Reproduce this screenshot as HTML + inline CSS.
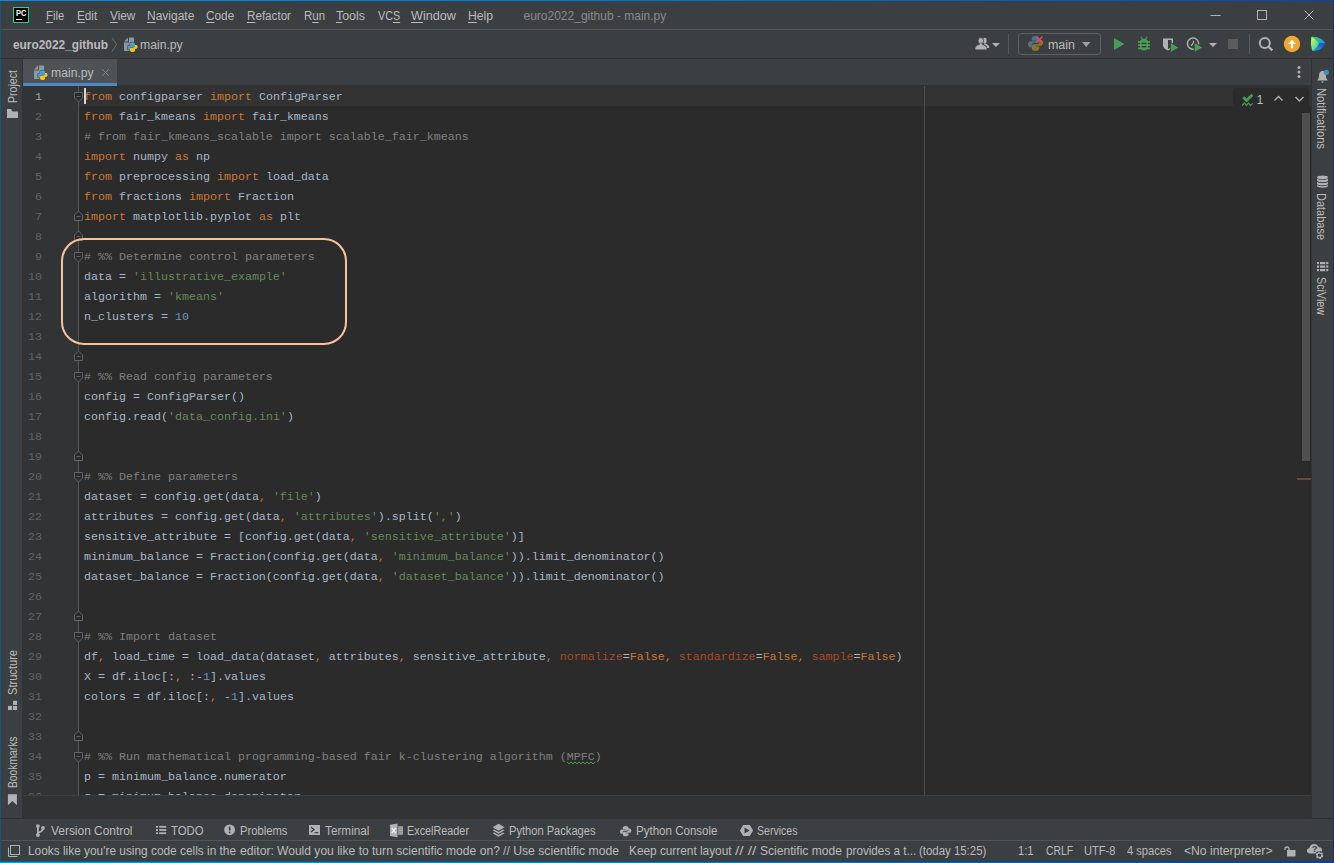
<!DOCTYPE html>
<html><head><meta charset="utf-8"><title>euro2022_github - main.py</title>
<style>
*{box-sizing:border-box;margin:0;padding:0}
html,body{width:1334px;height:863px;overflow:hidden;background:#3c3f41}
body{font-family:"Liberation Sans",sans-serif;color:#bbbbbb;font-size:12px;position:relative}
.abs{position:absolute}
svg{display:block;overflow:visible}
#win{position:absolute;left:0;top:0;width:1334px;height:863px;background:#3c3f41;overflow:hidden}
/* window frame */
#ftop{left:0;top:0;width:1334px;height:1px;background:linear-gradient(90deg,#0090e0,#0075d2 50%,#0446b0)}
#fleft{left:0;top:1px;width:1px;height:862px;background:#16567a}
#fright{left:1333px;top:1px;width:1px;height:862px;background:#183162}
#fbot{left:0;top:861px;width:1334px;height:2px;background:linear-gradient(90deg,#00a0e6,#007ec2 50%,#0a3fa0)}
#fbot2{left:0;top:861px;width:1334px;height:1px;background:linear-gradient(90deg,#15607f,#284b60 50%,#173c80)}
.lb{position:absolute;white-space:pre;line-height:14px;color:#bbbbbb}
.lb u{text-decoration:underline;text-underline-offset:1.5px;text-decoration-thickness:1px}
.hline{position:absolute;left:1px;width:1332px;height:1px}
.vt{position:absolute;white-space:pre;line-height:14px;font-size:12px;color:#bbbbbb;transform-origin:0 0}
/* editor */
#editor{left:23px;top:86px;width:1288px;height:709px;background:#2b2b2b;overflow:hidden}
#gutter{left:0;top:0;width:56px;height:710px;background:#313335}
#curline{left:56px;top:0;width:1232px;height:20px;background:#323232}
#foldline{left:55px;top:0;width:1px;height:710px;background:#555555}
#margin{left:901px;top:0;width:1px;height:710px;background:#4b4b4b}
#code{left:61px;top:1px;width:1200px;height:710px}
.ln{position:absolute;left:0;height:20px;line-height:20px;white-space:pre;font-family:"Liberation Mono",monospace;font-size:11.665px;color:#a9b7c6}
.k{color:#cc7832}.c{color:#808080}.s{color:#6a8759}.n{color:#6897bb}.p{color:#aa4926}
.w{color:#808080}
.no{position:absolute;left:0;width:19px;text-align:right;height:20px;line-height:20px;font-family:"Liberation Mono",monospace;font-size:11.665px;color:#606366}
.no.cur{color:#a4a3a3}
</style></head><body>
<div id="win">
<!-- menu bar -->
<div class="abs" style="left:13px;top:7px;width:16px;height:16px;background:#000;border:1px solid #21d789"></div>
<div class="abs" style="left:15.600px;top:8.600px;font-size:8.800px;font-weight:bold;color:#fff;line-height:9px;transform:scaleX(0.86);transform-origin:0 0">PC</div>
<div class="abs" style="left:16px;top:19px;width:6px;height:1px;background:#fff"></div>
<!-- window controls -->
<svg class="abs" style="left:1200px;top:1px" width="133" height="28" viewBox="0 0 133 28">
 <path d="M10.5,14.5 H20.5" stroke="#b4b4b4" stroke-width="1" fill="none"/>
 <rect x="57.5" y="9.5" width="9" height="9" stroke="#b4b4b4" stroke-width="1" fill="none"/>
 <path d="M104.5,9.5 L113.5,18.5 M113.5,9.5 L104.5,18.5" stroke="#b4b4b4" stroke-width="1" fill="none"/>
</svg>
<div class="hline" style="top:29px;background:#515355"></div>
<!-- nav bar -->
<svg class="abs" style="left:111px;top:37px" width="7" height="15" viewBox="0 0 7 15"><path d="M1,0.5 L5.5,7.5 L1,14.5" stroke="#6b6e70" stroke-width="1" fill="none"/></svg>
<svg class="abs pyfile" style="left:123px;top:36px;color:#3c3f41" width="16" height="17" viewBox="0 0 16 17"><use href="#pyfile"/></svg>
<div class="hline" style="top:58px;background:#323232"></div>
<!-- toolbar -->
<svg class="abs" style="left:960px;top:30px" width="374" height="28" viewBox="0 0 374 28">
 <!-- users -->
 <g fill="#afb1b3">
  <ellipse cx="24.800" cy="10.600" rx="1.900" ry="2.900"/>
  <path d="M24,13.300 C27.500,14 29.300,15.300 29.300,18 H27 C27,16 26,15 24,14.500 Z"/>
  <ellipse cx="20.800" cy="10.900" rx="2.700" ry="3.400" stroke="#3c3f41" stroke-width="0.800"/>
  <path d="M15,19.800 C15,16.200 17,15.300 19.500,14.600 V13 H22.100 V14.600 C24.600,15.300 27,16.200 27,19.800 Z" stroke="#3c3f41" stroke-width="0.500"/>
  <path d="M31.900,12.900 H40 L35.950,17 Z"/>
 </g>
 <rect x="48" y="4" width="1" height="20" fill="#555759"/>
 <!-- run config -->
 <rect x="58.5" y="3.5" width="82" height="21" rx="3" ry="3" fill="none" stroke="#5e6162"/>
 <g transform="translate(68,6) scale(1.5)">
  <path d="M5,0 C3,0 2.5,1 2.5,2 V3 H5 V3.5 H1.5 C0.5,3.5 0,4.5 0,5.5 C0,6.5 0.5,7.5 1.5,7.5 H2.5 V6 C2.5,5 3.3,4.5 4,4.5 H6 C6.8,4.5 7.5,4 7.5,3 V2 C7.5,1 7,0 5,0 Z" fill="#4a7591"/>
  <path d="M5,10 C7,10 7.5,9 7.5,8 V7 H5 V6.5 H8.5 C9.5,6.5 10,5.5 10,4.5 C10,3.5 9.5,2.5 8.500,2.5 H7.5 V4 C7.5,5 6.7,5.5 6,5.5 H4 C3.2,5.500 2.5,6 2.5,7 V8 C2.5,9 3,10 5,10 Z" fill="#8b742c"/>
 </g>
 <path d="M76.500,6.500 L82.500,12.500 M82.500,6.500 L76.500,12.500" stroke="#e0485a" stroke-width="1.600"/>
 <path d="M122,12 H130.500 L126.250,17 Z" fill="#9c9ea0"/>
 <!-- run -->
 <path d="M154,8 L164.500,14 L154,20 Z" fill="#499c54"/>
 <!-- debug -->
 <g fill="#499c54">
  <path d="M180,12 C180,9.500 182,9 184,9 C186,9 188,9.500 188,12 V16.500 C188,19 186.500,20.500 184,20.500 C181.500,20.500 180,19 180,16.500 Z"/>
  <path d="M180.300,7 L181.300,6.300 L183,8.800 H185 L186.700,6.300 L187.700,7 L185.800,9.800 H182.200 Z"/>
  <rect x="178" y="11" width="12" height="1.800"/><rect x="178" y="14.200" width="12" height="1.800"/><rect x="178" y="17.400" width="12" height="1.800"/>
 </g>
 <rect x="181.500" y="12.800" width="5" height="1.400" fill="#3c3f41"/><rect x="181.500" y="16" width="5" height="1.400" fill="#3c3f41"/>
 <!-- coverage -->
 <path d="M203,8.500 H213 V15 C213,18 210.500,19.500 208,20.500 C205.500,19.500 203,18 203,15 Z" fill="#afb1b3"/>
 <path d="M208,10 H211.500 V15 C211.500,17 210,18 208,19 Z" fill="#3c3f41"/>
 <path d="M210.300,12.300 L219,17.500 L210.300,22.700 Z" fill="#499c54" stroke="#3c3f41" stroke-width="1"/>
 <!-- profile -->
 <circle cx="233" cy="13.600" r="5.600" fill="none" stroke="#afb1b3" stroke-width="1.400"/>
 <path d="M233.500,10.800 V12.500 L231.200,15.800" stroke="#afb1b3" stroke-width="1.300" fill="none"/>
 <path d="M234.200,12.300 L243,17.500 L234.200,22.700 Z" fill="#499c54" stroke="#3c3f41" stroke-width="1"/>
 <path d="M249,13 H257 L253,17 Z" fill="#afb1b3"/>
 <!-- stop -->
 <rect x="268" y="9" width="10" height="10" fill="#5b5b5b"/>
 <rect x="289" y="4" width="1" height="20" fill="#555759"/>
 <!-- search -->
 <circle cx="304.800" cy="12.900" r="5" fill="none" stroke="#afb1b3" stroke-width="2"/>
 <path d="M308.300,16.400 L312.300,20.400" stroke="#afb1b3" stroke-width="2.200"/>
 <!-- update -->
 <circle cx="332" cy="14" r="8.200" fill="#f0a732"/>
 <path d="M332,9.800 L336,14 H333.100 V18.200 H330.900 V14 H328 Z" fill="#fff"/>
 <!-- code with me -->
 <defs>
  <linearGradient id="cw1" x1="0" y1="0" x2="1" y2="1"><stop offset="0" stop-color="#e6f74e"/><stop offset=".55" stop-color="#6fe08a"/><stop offset="1" stop-color="#17b6d8"/></linearGradient>
  <linearGradient id="cw2" x1="0" y1="0" x2="1" y2="1"><stop offset="0" stop-color="#35d18a"/><stop offset="1" stop-color="#1596d6"/></linearGradient>
  <linearGradient id="cw3" x1="1" y1="0" x2="0" y2="1"><stop offset="0" stop-color="#1b4fd0"/><stop offset="1" stop-color="#10a6e6"/></linearGradient>
 </defs>
 <path d="M351.500,6.800 C358,6.300 363.800,9.800 365.400,13.600 C360,13 357,13.300 355,14 C355,11 353.500,8.500 351.500,6.800 Z" fill="url(#cw2)"/>
 <path d="M365.400,13.600 C363.800,17.800 358,21.700 352.600,21 C354.500,18.500 355,16 355,14 C357,13.300 360,13 365.400,13.600 Z" fill="url(#cw3)"/>
 <path d="M351.500,6.800 C354.500,8.800 357.500,11 359,13.800 C357.500,16.800 355,19.500 352.600,21 C350.600,17 350.600,11 351.500,6.800 Z" fill="url(#cw1)"/>
</svg>
<!-- tab bar -->
<div class="abs" style="left:23px;top:85px;width:1288px;height:1px;background:#323232"></div>
<div class="abs" style="left:23px;top:59px;width:94px;height:27px;background:#4e5254"></div>
<div class="abs" style="left:23px;top:83px;width:94px;height:3px;background:#4a88c7"></div>
<svg class="abs" style="left:33px;top:64px;color:#4e5254" width="16" height="17" viewBox="0 0 16 17"><use href="#pyfile"/></svg>
<svg class="abs" style="left:101px;top:68px" width="9" height="9" viewBox="0 0 9 9"><path d="M1.200,1.200 L7.800,7.800 M7.800,1.200 L1.200,7.800" stroke="#7f8385" stroke-width="1"/></svg>
<svg class="abs" style="left:1296px;top:65px" width="6" height="16" viewBox="0 0 6 16"><circle cx="3" cy="2.400" r="1.500" fill="#afb1b3"/><circle cx="3" cy="7" r="1.500" fill="#afb1b3"/><circle cx="3" cy="11.600" r="1.500" fill="#afb1b3"/></svg>
<!-- left stripe -->
<div class="abs" style="left:22px;top:59px;width:1px;height:760px;background:#323232"></div>
<svg class="abs" style="left:6px;top:108px" width="13" height="11" viewBox="0 0 13 11"><path d="M1,1 H5 L6.500,3.500 H12 V10 H1 Z" fill="#afb1b3"/></svg>
<svg class="abs" style="left:0;top:700px" width="22" height="11" viewBox="0 0 22 11"><g fill="#afb1b3"><rect x="13" y="0.800" width="4.100" height="4.100"/><rect x="8" y="5.900" width="4.100" height="4.100"/><rect x="13" y="5.900" width="4.100" height="4.100"/></g></svg>
<svg class="abs" style="left:0;top:794px" width="22" height="12" viewBox="0 0 22 12"><path d="M7.900,0.200 H16.900 V11.200 L12.400,7 L7.900,11.200 Z" fill="#afb1b3"/></svg>
<!-- right stripe -->
<div class="abs" style="left:1311px;top:59px;width:1px;height:760px;background:#323232"></div>
<svg class="abs" style="left:1316px;top:69px" width="14" height="16" viewBox="0 0 14 16"><path d="M6.500,2 C3.800,2 3,4.500 3,7 C3,9.500 2,10.500 1,11.500 H12 C11,10.500 10,9.500 10,7 C10,4.500 9.200,2 6.500,2 Z" fill="#afb1b3"/><path d="M5,12.500 H8 L6.500,14 Z" fill="#afb1b3"/><circle cx="10.300" cy="3.300" r="2.600" fill="#3592c4"/></svg>
<svg class="abs" style="left:1316px;top:174.500px" width="13" height="14" viewBox="0 0 13 14"><g fill="#afb1b3"><ellipse cx="6.500" cy="2.300" rx="5.500" ry="1.900"/><path d="M1,3.600 C1,5.400 12,5.400 12,3.600 V5.600 C12,7.600 1,7.600 1,5.600 Z"/><path d="M1,6.700 C1,8.500 12,8.500 12,6.700 V8.700 C12,10.700 1,10.700 1,8.700 Z"/><path d="M1,9.800 C1,11.600 12,11.600 12,9.800 V10.900 C12,13.200 1,13.200 1,10.900 Z"/></g></svg>
<svg class="abs" style="left:1316px;top:262px" width="13" height="10" viewBox="0 0 13 10"><g fill="#afb1b3"><rect x="1" y="0" width="2" height="2.200"/><rect x="4" y="0" width="5.300" height="2.200"/><rect x="10.300" y="0" width="2" height="2.200"/><rect x="1" y="3.5" width="2" height="2.200"/><rect x="4" y="3.5" width="5.300" height="2.200"/><rect x="10.300" y="3.5" width="2" height="2.200"/><rect x="1" y="7" width="2" height="2.200"/><rect x="4" y="7" width="5.300" height="2.200"/><rect x="10.300" y="7" width="2" height="2.200"/></g></svg>
<!-- editor -->
<div id="editor" class="abs">
  <div id="gutter" class="abs"></div>
  <div id="curline" class="abs"></div>
  <div id="margin" class="abs"></div>
  <div id="foldline" class="abs"></div>
<svg class="abs" style="left:50px;top:6px" width="11" height="12" viewBox="0 0 11 12"><path d="M1.5,0.5 H9.5 V6 L5.5,10 L1.5,6 Z" fill="#2b2b2b" stroke="#606366" stroke-width="1"/><path d="M3.5,4.5 H7.5" stroke="#606366" stroke-width="1"/></svg>
<svg class="abs" style="left:50px;top:166px" width="11" height="12" viewBox="0 0 11 12"><path d="M1.5,0.5 H9.5 V6 L5.5,10 L1.5,6 Z" fill="#2b2b2b" stroke="#606366" stroke-width="1"/><path d="M3.5,4.5 H7.5" stroke="#606366" stroke-width="1"/></svg>
<svg class="abs" style="left:50px;top:286px" width="11" height="12" viewBox="0 0 11 12"><path d="M1.5,0.5 H9.5 V6 L5.5,10 L1.5,6 Z" fill="#2b2b2b" stroke="#606366" stroke-width="1"/><path d="M3.5,4.5 H7.5" stroke="#606366" stroke-width="1"/></svg>
<svg class="abs" style="left:50px;top:386px" width="11" height="12" viewBox="0 0 11 12"><path d="M1.5,0.5 H9.5 V6 L5.5,10 L1.5,6 Z" fill="#2b2b2b" stroke="#606366" stroke-width="1"/><path d="M3.5,4.5 H7.5" stroke="#606366" stroke-width="1"/></svg>
<svg class="abs" style="left:50px;top:546px" width="11" height="12" viewBox="0 0 11 12"><path d="M1.5,0.5 H9.5 V6 L5.5,10 L1.5,6 Z" fill="#2b2b2b" stroke="#606366" stroke-width="1"/><path d="M3.5,4.5 H7.5" stroke="#606366" stroke-width="1"/></svg>
<svg class="abs" style="left:50px;top:666px" width="11" height="12" viewBox="0 0 11 12"><path d="M1.5,0.5 H9.5 V6 L5.5,10 L1.5,6 Z" fill="#2b2b2b" stroke="#606366" stroke-width="1"/><path d="M3.5,4.5 H7.5" stroke="#606366" stroke-width="1"/></svg>
<svg class="abs" style="left:50px;top:124px" width="11" height="12" viewBox="0 0 11 12"><path d="M1.5,10.5 H9.5 V5 L5.5,1 L1.5,5 Z" fill="#2b2b2b" stroke="#606366" stroke-width="1"/><path d="M3.5,6.5 H7.5" stroke="#606366" stroke-width="1"/></svg>
<svg class="abs" style="left:50px;top:144px" width="11" height="12" viewBox="0 0 11 12"><path d="M1.5,10.5 H9.5 V5 L5.5,1 L1.5,5 Z" fill="#2b2b2b" stroke="#606366" stroke-width="1"/><path d="M3.5,6.5 H7.5" stroke="#606366" stroke-width="1"/></svg>
<svg class="abs" style="left:50px;top:264px" width="11" height="12" viewBox="0 0 11 12"><path d="M1.5,10.5 H9.5 V5 L5.5,1 L1.5,5 Z" fill="#2b2b2b" stroke="#606366" stroke-width="1"/><path d="M3.5,6.5 H7.5" stroke="#606366" stroke-width="1"/></svg>
<svg class="abs" style="left:50px;top:364px" width="11" height="12" viewBox="0 0 11 12"><path d="M1.5,10.5 H9.5 V5 L5.5,1 L1.5,5 Z" fill="#2b2b2b" stroke="#606366" stroke-width="1"/><path d="M3.5,6.5 H7.5" stroke="#606366" stroke-width="1"/></svg>
<svg class="abs" style="left:50px;top:524px" width="11" height="12" viewBox="0 0 11 12"><path d="M1.5,10.5 H9.5 V5 L5.5,1 L1.5,5 Z" fill="#2b2b2b" stroke="#606366" stroke-width="1"/><path d="M3.5,6.5 H7.5" stroke="#606366" stroke-width="1"/></svg>
<svg class="abs" style="left:50px;top:644px" width="11" height="12" viewBox="0 0 11 12"><path d="M1.5,10.5 H9.5 V5 L5.5,1 L1.5,5 Z" fill="#2b2b2b" stroke="#606366" stroke-width="1"/><path d="M3.5,6.5 H7.5" stroke="#606366" stroke-width="1"/></svg>
  <div id="nums" class="abs" style="left:0;top:1px">
<div class="no cur" style="top:0px">1</div>
<div class="no" style="top:20px">2</div>
<div class="no" style="top:40px">3</div>
<div class="no" style="top:60px">4</div>
<div class="no" style="top:80px">5</div>
<div class="no" style="top:100px">6</div>
<div class="no" style="top:120px">7</div>
<div class="no" style="top:140px">8</div>
<div class="no" style="top:160px">9</div>
<div class="no" style="top:180px">10</div>
<div class="no" style="top:200px">11</div>
<div class="no" style="top:220px">12</div>
<div class="no" style="top:240px">13</div>
<div class="no" style="top:260px">14</div>
<div class="no" style="top:280px">15</div>
<div class="no" style="top:300px">16</div>
<div class="no" style="top:320px">17</div>
<div class="no" style="top:340px">18</div>
<div class="no" style="top:360px">19</div>
<div class="no" style="top:380px">20</div>
<div class="no" style="top:400px">21</div>
<div class="no" style="top:420px">22</div>
<div class="no" style="top:440px">23</div>
<div class="no" style="top:460px">24</div>
<div class="no" style="top:480px">25</div>
<div class="no" style="top:500px">26</div>
<div class="no" style="top:520px">27</div>
<div class="no" style="top:540px">28</div>
<div class="no" style="top:560px">29</div>
<div class="no" style="top:580px">30</div>
<div class="no" style="top:600px">31</div>
<div class="no" style="top:620px">32</div>
<div class="no" style="top:640px">33</div>
<div class="no" style="top:660px">34</div>
<div class="no" style="top:680px">35</div>
<div class="no" style="top:700px">36</div>
  </div>
  <div id="code" class="abs">
<div class="ln" style="top:0px"><span class="k">from</span> configparser <span class="k">import</span> ConfigParser</div>
<div class="ln" style="top:20px"><span class="k">from</span> fair_kmeans <span class="k">import</span> fair_kmeans</div>
<div class="ln" style="top:40px"><span class="c"># from fair_kmeans_scalable import scalable_fair_kmeans</span></div>
<div class="ln" style="top:60px"><span class="k">import</span> numpy <span class="k">as</span> np</div>
<div class="ln" style="top:80px"><span class="k">from</span> preprocessing <span class="k">import</span> load_data</div>
<div class="ln" style="top:100px"><span class="k">from</span> fractions <span class="k">import</span> Fraction</div>
<div class="ln" style="top:120px"><span class="k">import</span> matplotlib.pyplot <span class="k">as</span> plt</div>
<div class="ln" style="top:140px"></div>
<div class="ln" style="top:160px"><span class="c"># %% Determine control parameters</span></div>
<div class="ln" style="top:180px">data = <span class="s">'illustrative_example'</span></div>
<div class="ln" style="top:200px">algorithm = <span class="s">'kmeans'</span></div>
<div class="ln" style="top:220px">n_clusters = <span class="n">10</span></div>
<div class="ln" style="top:240px"></div>
<div class="ln" style="top:260px"></div>
<div class="ln" style="top:280px"><span class="c"># %% Read config parameters</span></div>
<div class="ln" style="top:300px">config = ConfigParser()</div>
<div class="ln" style="top:320px">config.read(<span class="s">'data_config.ini'</span>)</div>
<div class="ln" style="top:340px"></div>
<div class="ln" style="top:360px"></div>
<div class="ln" style="top:380px"><span class="c"># %% Define parameters</span></div>
<div class="ln" style="top:400px">dataset = config.get(data<span class="k">,</span> <span class="s">'file'</span>)</div>
<div class="ln" style="top:420px">attributes = config.get(data<span class="k">,</span> <span class="s">'attributes'</span>).split(<span class="s">','</span>)</div>
<div class="ln" style="top:440px">sensitive_attribute = [config.get(data<span class="k">,</span> <span class="s">'sensitive_attribute'</span>)]</div>
<div class="ln" style="top:460px">minimum_balance = Fraction(config.get(data<span class="k">,</span> <span class="s">'minimum_balance'</span>)).limit_denominator()</div>
<div class="ln" style="top:480px">dataset_balance = Fraction(config.get(data<span class="k">,</span> <span class="s">'dataset_balance'</span>)).limit_denominator()</div>
<div class="ln" style="top:500px"></div>
<div class="ln" style="top:520px"></div>
<div class="ln" style="top:540px"><span class="c"># %% Import dataset</span></div>
<div class="ln" style="top:560px">df<span class="k">,</span> load_time = load_data(dataset<span class="k">,</span> attributes<span class="k">,</span> sensitive_attribute<span class="k">,</span> <span class="p">normalize</span>=<span class="k">False</span><span class="k">,</span> <span class="p">standardize</span>=<span class="k">False</span><span class="k">,</span> <span class="p">sample</span>=<span class="k">False</span>)</div>
<div class="ln" style="top:580px">X = df.iloc[:<span class="k">,</span> :-<span class="n">1</span>].values</div>
<div class="ln" style="top:600px">colors = df.iloc[:<span class="k">,</span> -<span class="n">1</span>].values</div>
<div class="ln" style="top:620px"></div>
<div class="ln" style="top:640px"></div>
<div class="ln" style="top:660px"><span class="c"># %% Run mathematical programming-based fair k-clustering algorithm (</span><span class="w">MPFC</span><span class="c">)</span></div>
<div class="ln" style="top:680px">p = minimum_balance.numerator</div>
<div class="ln" style="top:700px">q = minimum_balance.denominator</div>
  </div>
  <svg class="abs" style="left:0;top:0" width="600" height="700" viewBox="0 0 600 700"><polyline points="544,675.9 546,677.9 548,675.9 550,677.9 552,675.9 554,677.9 556,675.9 558,677.9 560,675.9 562,677.9 564,675.9 566,677.9 568,675.9 570,677.9 572,675.9" fill="none" stroke="#55995a" stroke-width="1"/></svg>
  <!-- caret -->
  <div class="abs" style="left:61px;top:2px;width:2px;height:16px;background:#d8d8d8"></div>
  <!-- annotation rounded rect -->
  <div class="abs" style="left:38px;top:152px;width:286px;height:107px;border:2px solid #f9c29b;border-radius:23px"></div>
  <!-- inspection widget -->
  <div class="abs" style="left:1210px;top:2px;width:76px;height:18px;background:#2b2b2b;border-radius:4px 4px 0 0"></div>
  <svg class="abs" style="left:1216px;top:5px" width="70" height="16" viewBox="0 0 70 16">
   <path d="M4.300,6.200 L7.600,9.500 L13.300,3.800" stroke="#499c54" stroke-width="2.800" fill="none"/>
   <path d="M3,14.500 L5.500,12 L7.500,14.500 L9.500,12 L11.500,14.500 L13.700,12.300" stroke="#499c54" stroke-width="1.200" fill="none"/>
   <path d="M35.500,9.500 L39.500,5.500 L43.500,9.500" stroke="#afb1b3" stroke-width="1.300" fill="none"/>
   <path d="M56.500,6 L60.500,10 L64.500,6" stroke="#afb1b3" stroke-width="1.300" fill="none"/>
  </svg>
  <!-- scrollbar + error stripe -->
  <div class="abs" style="left:1279px;top:27px;width:8px;height:348px;background:#4f4f4f"></div>
  <div class="abs" style="left:1274px;top:392px;width:14px;height:2px;background:#714733"></div>
</div>
<!-- horizontal scrollbar strip -->
<div class="abs" style="left:23px;top:795px;width:1288px;height:23px;background:#313335"></div>
<div class="abs" style="left:23px;top:795px;width:1288px;height:1px;background:#3a3c3e"></div>
<div class="hline" style="top:818px;background:#323232"></div>
<!-- bottom tool bar icons -->
<svg class="abs" style="left:0;top:819px" width="820" height="22" viewBox="0 0 820 22">
 <g fill="#afb1b3" stroke="none">
  <!-- vcs branch -->
  <circle cx="37.900" cy="7.100" r="1.900"/><circle cx="37.900" cy="16" r="1.900"/><circle cx="43" cy="8.900" r="1.900"/>
  <rect x="37" y="7" width="1.800" height="9"/>
  <!-- todo list -->
  <rect x="156" y="6.900" width="2" height="1.800"/><rect x="159.200" y="6.900" width="7" height="1.800"/>
  <rect x="156" y="10.100" width="2" height="1.800"/><rect x="159.200" y="10.100" width="7" height="1.800"/>
  <rect x="156" y="13.300" width="2" height="1.800"/><rect x="159.200" y="13.300" width="7" height="1.800"/>
  <!-- problems -->
  <circle cx="229.600" cy="10.800" r="5.400"/>
  <!-- terminal -->
  <rect x="309" y="6" width="11" height="10"/>
  <!-- excel -->
  <path d="M390,5.800 L397.500,4.600 V18.200 L390,17 Z"/>
  <!-- packages (layers) -->
  <path d="M498.600,4.800 L504.600,8.300 L498.600,11.800 L492.600,8.300 Z"/>
  <path d="M492.600,11.300 L494.300,10.400 L498.600,12.900 L502.900,10.400 L504.600,11.300 L498.600,14.800 Z"/>
  <path d="M492.600,14.300 L494.300,13.400 L498.600,15.900 L502.900,13.400 L504.600,14.300 L498.600,17.800 Z"/>
  <!-- services -->
  <path d="M739.900,11.500 L743.200,6 H749.800 L753.100,11.500 L749.800,17 H743.200 Z"/>
 </g>
 <path d="M43,8.900 C43,12.500 40.500,12.800 37.900,13.800" stroke="#afb1b3" stroke-width="1.600" fill="none"/>
 <rect x="398" y="7" width="5" height="9" fill="#8a8c8e"/>
 <path d="M399,9 H403 M399,11.500 H403 M399,14 H403" stroke="#b8babc" stroke-width="0.900"/>
 <rect x="228.800" y="7.600" width="1.600" height="4" fill="#3c3f41"/><rect x="228.800" y="12.600" width="1.600" height="1.600" fill="#3c3f41"/>
 <path d="M311,8.200 L314,10.600 L311,13" stroke="#3c3f41" stroke-width="1.300" fill="none"/><rect x="314.500" y="13" width="3.800" height="1.200" fill="#3c3f41"/>
 <path d="M391.800,9 L395.800,14 M395.800,9 L391.800,14" stroke="#f0f0f0" stroke-width="1.300"/>
 <path d="M744.500,8.600 L749.600,11.500 L744.500,14.400 Z" fill="#3c3f41"/>
 <g transform="translate(620,7) scale(1.130,1.030)">
  <path d="M5,0 C3,0 2.500,1 2.500,2 V3 H5 V3.500 H1.500 C0.500,3.500 0,4.500 0,5.500 C0,6.500 0.500,7.500 1.500,7.500 H2.500 V6 C2.500,5 3.300,4.500 4,4.500 H6 C6.800,4.500 7.500,4 7.500,3 V2 C7.500,1 7,0 5,0 Z" fill="#afb1b3"/>
  <path d="M5,10 C7,10 7.500,9 7.500,8 V7 H5 V6.500 H8.500 C9.500,6.500 10,5.500 10,4.500 C10,3.500 9.500,2.500 8.500,2.500 H7.500 V4 C7.500,5 6.700,5.500 6,5.500 H4 C3.200,5.500 2.500,6 2.500,7 V8 C2.500,9 3,10 5,10 Z" fill="#afb1b3"/>
 </g>
</svg>
<div class="hline" style="top:840px;background:#515355"></div>
<!-- status bar icons -->
<svg class="abs" style="left:0;top:841px" width="1334" height="20" viewBox="0 0 1334 20">
 <rect x="10.500" y="4.500" width="9" height="9" fill="none" stroke="#afb1b3"/>
 <path d="M8.500,6.500 V15.500 H17.500" fill="none" stroke="#afb1b3"/>
 <!-- lock -->
 <rect x="1287" y="9" width="8.500" height="6.500" fill="#afb1b3"/>
 <path d="M1285,9 V7.500 C1285,5.500 1289,5.500 1289,7.500 V9" fill="none" stroke="#afb1b3" stroke-width="1.300"/>
 <!-- cloud -->
 <path d="M1310.500,12.500 C1306,12.500 1305.800,7.500 1309.500,7 C1310,2.300 1317,1.500 1318.500,6 C1322.500,6.200 1323,10.500 1321,12.500 Z" fill="#afb1b3"/>
 <text x="1311.800" y="11.300" font-family="Liberation Sans" font-size="9.500" font-weight="bold" fill="#3c3f41">?</text>
 <circle cx="1319.500" cy="14.300" r="4.300" fill="#3c3f41"/>
 <circle cx="1319.500" cy="14.300" r="2.900" fill="none" stroke="#afb1b3" stroke-width="1.800" stroke-dasharray="1.700 1.340"/>
 <circle cx="1319.500" cy="14.300" r="2.300" fill="none" stroke="#afb1b3" stroke-width="1.200"/>
</svg>
<!-- defs -->
<svg width="0" height="0" style="position:absolute"><defs>
 <g id="pyfile">
  <path d="M1,5.500 L5,1.500 V5.500 Z" fill="#9aa7b0" opacity=".85"/>
  <path d="M6,1.500 H11 V15 H1 V6.500 H6 Z" fill="#9aa7b0" opacity=".85"/>
  <g transform="translate(4.700,6.600) scale(0.970,0.930)">
   <path d="M5,0 C3,0 2.500,1 2.500,2 V3 H5 V3.500 H1.500 C0.500,3.500 0,4.500 0,5.500 C0,6.500 0.500,7.500 1.500,7.500 H2.500 V6 C2.500,5 3.300,4.500 4,4.500 H6 C6.800,4.500 7.500,4 7.500,3 V2 C7.500,1 7,0 5,0 Z" fill="#3fa3da" stroke="currentColor" stroke-width="1.600" paint-order="stroke"/>
   <path d="M5,10 C7,10 7.500,9 7.500,8 V7 H5 V6.500 H8.500 C9.500,6.500 10,5.500 10,4.500 C10,3.500 9.500,2.500 8.500,2.500 H7.500 V4 C7.500,5 6.700,5.500 6,5.500 H4 C3.200,5.500 2.500,6 2.500,7 V8 C2.500,9 3,10 5,10 Z" fill="#fcc40e" stroke="currentColor" stroke-width="1.600" paint-order="stroke"/>
   <path d="M5,0 C3,0 2.500,1 2.500,2 V3 H5 V3.500 H1.500 C0.500,3.500 0,4.500 0,5.500 C0,6.500 0.500,7.500 1.500,7.500 H2.500 V6 C2.500,5 3.300,4.500 4,4.500 H6 C6.800,4.500 7.500,4 7.500,3 V2 C7.500,1 7,0 5,0 Z" fill="#3fa3da"/>
   <path d="M5,10 C7,10 7.500,9 7.500,8 V7 H5 V6.500 H8.500 C9.500,6.500 10,5.500 10,4.500 C10,3.500 9.500,2.500 8.500,2.500 H7.500 V4 C7.500,5 6.700,5.500 6,5.500 H4 C3.200,5.500 2.500,6 2.500,7 V8 C2.500,9 3,10 5,10 Z" fill="#fcc40e"/>
  </g>
 </g>
</defs></svg>
<div class="lb" style="left:46.3px;top:9.4px;font-size:12px;color:#bbbbbb;transform:scaleX(0.9409);transform-origin:0 0;"><u>F</u>ile</div>
<div class="lb" style="left:77px;top:9.4px;font-size:12px;color:#bbbbbb;transform:scaleX(0.9764);transform-origin:0 0;"><u>E</u>dit</div>
<div class="lb" style="left:109.8px;top:9.4px;font-size:12px;color:#bbbbbb;transform:scaleX(0.9846);transform-origin:0 0;"><u>V</u>iew</div>
<div class="lb" style="left:147px;top:9.4px;font-size:12px;color:#bbbbbb;"><u>N</u>avigate</div>
<div class="lb" style="left:206px;top:9.4px;font-size:12px;color:#bbbbbb;transform:scaleX(0.9830);transform-origin:0 0;"><u>C</u>ode</div>
<div class="lb" style="left:247px;top:9.4px;font-size:12px;color:#bbbbbb;transform:scaleX(0.9700);transform-origin:0 0;"><u>R</u>efactor</div>
<div class="lb" style="left:304px;top:9.4px;font-size:12px;color:#bbbbbb;transform:scaleX(0.9539);transform-origin:0 0;">R<u>u</u>n</div>
<div class="lb" style="left:336.4px;top:9.4px;font-size:12px;color:#bbbbbb;transform:scaleX(1.0316);transform-origin:0 0;"><u>T</u>ools</div>
<div class="lb" style="left:377.8px;top:9.4px;font-size:12px;color:#bbbbbb;transform:scaleX(0.8992);transform-origin:0 0;">VC<u>S</u></div>
<div class="lb" style="left:410.6px;top:9.4px;font-size:12px;color:#bbbbbb;transform:scaleX(1.0542);transform-origin:0 0;"><u>W</u>indow</div>
<div class="lb" style="left:468px;top:9.4px;font-size:12px;color:#bbbbbb;transform:scaleX(1.0127);transform-origin:0 0;"><u>H</u>elp</div>
<div class="lb" style="left:523.5px;top:9.4px;font-size:12px;color:#8a8a8a;">euro2022_github - main.py</div>
<div class="lb" style="left:13.3px;top:37.6px;font-size:12px;color:#bbbbbb;font-weight:bold;transform:scaleX(0.9893);transform-origin:0 0;">euro2022_github</div>
<div class="lb" style="left:140.3px;top:37.6px;font-size:12px;color:#bbbbbb;transform:scaleX(1.0159);transform-origin:0 0;">main.py</div>
<div class="lb" style="left:51.3px;top:65.8px;font-size:12px;color:#bbbbbb;transform:scaleX(1.0159);transform-origin:0 0;">main.py</div>
<div class="lb" style="left:1047.5px;top:37.6px;font-size:12px;color:#bbbbbb;transform:scaleX(1.0378);transform-origin:0 0;">main</div>
<div class="lb" style="left:51px;top:823.8px;font-size:12px;color:#bbbbbb;transform:scaleX(0.9933);transform-origin:0 0;">Version Control</div>
<div class="lb" style="left:171px;top:823.8px;font-size:12px;color:#bbbbbb;transform:scaleX(0.9433);transform-origin:0 0;">TODO</div>
<div class="lb" style="left:240px;top:823.8px;font-size:12px;color:#bbbbbb;transform:scaleX(0.9371);transform-origin:0 0;">Problems</div>
<div class="lb" style="left:325px;top:823.8px;font-size:12px;color:#bbbbbb;transform:scaleX(0.9811);transform-origin:0 0;">Terminal</div>
<div class="lb" style="left:406.5px;top:823.8px;font-size:12px;color:#bbbbbb;transform:scaleX(0.9024);transform-origin:0 0;">ExcelReader</div>
<div class="lb" style="left:509px;top:823.8px;font-size:12px;color:#bbbbbb;transform:scaleX(0.9261);transform-origin:0 0;">Python Packages</div>
<div class="lb" style="left:636px;top:823.8px;font-size:12px;color:#bbbbbb;transform:scaleX(0.9618);transform-origin:0 0;">Python Console</div>
<div class="lb" style="left:757px;top:823.8px;font-size:12px;color:#bbbbbb;transform:scaleX(0.8801);transform-origin:0 0;">Services</div>
<div class="lb" style="left:28.2px;top:844.3px;font-size:12px;color:#bbbbbb;transform:scaleX(0.9891);transform-origin:0 0;">Looks like you're using </div>
<div class="lb" style="left:151.2px;top:844.3px;font-size:12px;color:#bbbbbb;transform:scaleX(0.9878);transform-origin:0 0;">code cells in the </div>
<div class="lb" style="left:239.5px;top:844.3px;font-size:12px;color:#bbbbbb;transform:scaleX(1.0194);transform-origin:0 0;">editor: </div>
<div class="lb" style="left:276.9px;top:844.3px;font-size:12px;color:#bbbbbb;transform:scaleX(1.0063);transform-origin:0 0;">Would you like to </div>
<div class="lb" style="left:372px;top:844.3px;font-size:12px;color:#bbbbbb;transform:scaleX(1.0087);transform-origin:0 0;">turn scientific </div>
<div class="lb" style="left:446px;top:844.3px;font-size:12px;color:#bbbbbb;transform:scaleX(1.0102);transform-origin:0 0;">mode on? </div>
<div class="lb" style="left:503.3px;top:844.3px;font-size:12px;color:#bbbbbb;transform:scaleX(1.0171);transform-origin:0 0;">// Use scientific mode</div>
<div class="lb" style="left:628.7px;top:844.3px;font-size:12px;color:#bbbbbb;transform:scaleX(0.9850);transform-origin:0 0;">Keep current layout </div>
<div class="lb" style="left:734.5px;top:844.3px;font-size:12px;color:#bbbbbb;transform:scaleX(1.2840);transform-origin:0 0;">// // </div>
<div class="lb" style="left:760.2px;top:844.3px;font-size:12px;color:#bbbbbb;transform:scaleX(1.0070);transform-origin:0 0;">Scientific mode </div>
<div class="lb" style="left:845.5px;top:844.3px;font-size:12px;color:#bbbbbb;transform:scaleX(0.9751);transform-origin:0 0;">provides a t... </div>
<div class="lb" style="left:919px;top:844.3px;font-size:12px;color:#bbbbbb;transform:scaleX(0.9517);transform-origin:0 0;">(today 15:25)</div>
<div class="lb" style="left:1018px;top:844.3px;font-size:12px;color:#bbbbbb;transform:scaleX(0.9288);transform-origin:0 0;">1:1</div>
<div class="lb" style="left:1045.5px;top:844.3px;font-size:12px;color:#bbbbbb;transform:scaleX(0.8614);transform-origin:0 0;">CRLF</div>
<div class="lb" style="left:1084px;top:844.3px;font-size:12px;color:#bbbbbb;transform:scaleX(0.9265);transform-origin:0 0;">UTF-8</div>
<div class="lb" style="left:1127px;top:844.3px;font-size:12px;color:#bbbbbb;transform:scaleX(0.9265);transform-origin:0 0;">4 spaces</div>
<div class="lb" style="left:1184px;top:844.3px;font-size:12px;color:#bbbbbb;transform:scaleX(1.0127);transform-origin:0 0;">&lt;No interpreter&gt;</div>
<div class="lb" style="left:1256.6px;top:93px;font-size:12.5px;color:#bbbbbb;">1</div>
<div class="vt" style="left:6px;top:102.5px;transform:rotate(-90deg) scaleX(0.8833);">Project</div>
<div class="vt" style="left:6px;top:694.5px;transform:rotate(-90deg) scaleX(0.9243);">Structure</div>
<div class="vt" style="left:6px;top:788.2px;transform:rotate(-90deg) scaleX(0.8579);">Bookmarks</div>
<div class="vt" style="left:1328px;top:87.5px;transform:rotate(90deg) scaleX(0.9331);">Notifications</div>
<div class="vt" style="left:1328px;top:192.5px;transform:rotate(90deg) scaleX(0.9148);">Database</div>
<div class="vt" style="left:1328px;top:277.3px;transform:rotate(90deg) scaleX(0.8948);">SciView</div>
<!-- frame -->
<div id="ftop" class="abs"></div><div id="fleft" class="abs"></div><div id="fright" class="abs"></div><div id="fbot" class="abs"></div><div id="fbot2" class="abs"></div>
</div>
</body></html>
